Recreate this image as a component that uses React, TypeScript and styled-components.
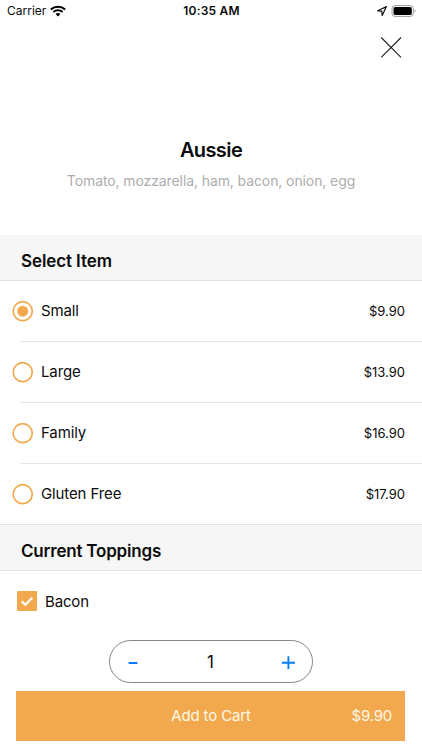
import React, { useState } from "react";
import styled, { createGlobalStyle } from "styled-components";

const ORANGE = "#f2a94d";

const GlobalStyle = createGlobalStyle`
  * { box-sizing: border-box; }
  body { margin: 0; background: #fff; }
  button { font: inherit; color: inherit; background: none; border: 0; padding: 0; cursor: pointer; }
`;

const Screen = styled.main`
  width: 422px;
  height: 750px;
  display: flex;
  flex-direction: column;
  overflow: hidden;
  background: #fff;
  color: #0b0b0c;
  font-family: Inter, "Liberation Sans", sans-serif;
`;

const Text = styled.span<{ $size: number; $weight?: number; $spacing?: number; $color?: string }>`
  font-size: ${(p) => p.$size}px;
  font-weight: ${(p) => p.$weight ?? 400};
  letter-spacing: ${(p) => p.$spacing ?? 0}px;
  color: ${(p) => p.$color ?? "inherit"};
  line-height: 20px;
  white-space: nowrap;
`;

const StatusBar = styled.header`
  height: 22px;
  padding: 0 6px 0 7px;
  display: grid;
  grid-template-columns: 1fr auto 1fr;
  align-items: center;
  flex: none;
`;

const StatusGroup = styled.div<{ $end?: boolean }>`
  display: flex;
  align-items: center;
  gap: 4px;
  justify-content: ${(p) => (p.$end ? "flex-end" : "flex-start")};
`;

const TopBar = styled.div`
  height: 50px;
  padding: 15px 20px 0 0;
  display: flex;
  justify-content: flex-end;
  align-items: flex-start;
  flex: none;
`;

const CloseButton = styled.button`
  width: 22px;
  height: 22px;
  display: block;
  svg { display: block; }
`;

const Intro = styled.section`
  height: 163px;
  padding-top: 68px;
  display: flex;
  flex-direction: column;
  align-items: center;
  gap: 11px;
  flex: none;
`;

const SectionHeader = styled.h2<{ $ruled?: boolean }>`
  height: ${(p) => (p.$ruled ? 47 : 46)}px;
  margin: 0;
  padding: 7px 21px 0;
  display: flex;
  align-items: center;
  background: #f6f6f6;
  border-top: ${(p) => (p.$ruled ? "1px solid #e2e2e5" : "0")};
  border-bottom: 1px solid #e2e2e5;
  flex: none;
`;

const OptionList = styled.div`
  flex: none;
`;

const Option = styled.button<{ $last: boolean }>`
  width: 100%;
  height: ${(p) => (p.$last ? 60 : 61)}px;
  padding: 0 17px ${(p) => (p.$last ? 0 : 1)}px 12px;
  display: flex;
  align-items: center;
  gap: 8px;
  background: ${(p) =>
    p.$last ? "none" : "linear-gradient(#e5e5e7, #e5e5e7) 20px 100% / 402px 1px no-repeat"};
`;

const Price = styled(Text)`
  margin-left: auto;
`;

const Radio = styled.span<{ $on: boolean }>`
  width: 21px;
  height: 21px;
  svg { display: block; }
  circle:last-child { fill: ${(p) => (p.$on ? ORANGE : "none")}; }
`;

const Topping = styled.label`
  height: 60px;
  padding-left: 17px;
  display: flex;
  align-items: center;
  gap: 8px;
  flex: none;
`;

const ToppingName = styled(Text)`
  padding-top: 1px;
`;

const Checkbox = styled.span`
  width: 20px;
  height: 20px;
  border-radius: 1px;
  background: ${ORANGE};
  svg { display: block; }
`;

const Footer = styled.footer`
  padding: 9px 17px 0 16px;
  display: flex;
  flex-direction: column;
  align-items: center;
  gap: 8px;
`;

const Stepper = styled.div`
  width: 204px;
  height: 43px;
  padding: 0 16px;
  border: 1px solid #858585;
  border-radius: 22px;
  display: flex;
  align-items: center;
  justify-content: space-between;
`;

const StepButton = styled.button`
  width: 14px;
  height: 14px;
  svg { display: block; }
`;

const CartButton = styled.button`
  width: 389px;
  height: 50px;
  padding: 0 13px 0 14px;
  display: grid;
  grid-template-columns: 1fr auto 1fr;
  align-items: center;
  background: ${ORANGE};
  color: #fff8e8;
`;

const CartPrice = styled(Text)`
  justify-self: end;
`;

const WifiIcon = () => (
  <svg width="16" height="13" viewBox="0 0 15 13" preserveAspectRatio="none" fill="none" stroke="#000">
    <path d="M.8 4.4a9.6 9.6 0 0 1 13.4 0" strokeWidth="2.1" />
    <path d="M3.2 7a6.1 6.1 0 0 1 8.6 0" strokeWidth="1.9" />
    <path d="M5.2 9a3.4 3.4 0 0 1 4.6 0L7.5 11.4z" fill="#000" stroke="none" />
  </svg>
);

const LocationIcon = () => (
  <svg width="10" height="10" viewBox="0 0 10 10" fill="none" stroke="#111" strokeWidth="1.2" strokeLinejoin="round">
    <path d="M9.4.6.7 4.8l4.1.4.4 4.2z" />
  </svg>
);

const BatteryIcon = () => (
  <svg width="25" height="12" viewBox="0 0 25 12">
    <rect x="1" y=".6" width="21.3" height="10.8" rx="3" fill="#fff" stroke="#999" strokeWidth="1" />
    <rect x="2.5" y="2.1" width="18.3" height="7.8" rx="1.6" fill="#000" />
    <path d="M23.6 4.2c1.3.6 1.3 3 0 3.6z" fill="#888" />
  </svg>
);

const OPTIONS = [
  { name: "Small", price: "$9.90" },
  { name: "Large", price: "$13.90" },
  { name: "Family", price: "$16.90" },
  { name: "Gluten Free", price: "$17.90" },
];

export default function App() {
  const [selected, setSelected] = useState(0);
  const [count, setCount] = useState(1);

  return (
    <Screen>
      <GlobalStyle />
      <StatusBar>
        <StatusGroup>
          <Text $size={12}>Carrier</Text>
          <WifiIcon />
        </StatusGroup>
        <Text $size={12} $weight={600} $spacing={0.2}>10:35 AM</Text>
        <StatusGroup $end>
          <LocationIcon />
          <BatteryIcon />
        </StatusGroup>
      </StatusBar>
      <TopBar>
        <CloseButton aria-label="Close">
          <svg width="22" height="22" viewBox="0 0 22 22" stroke="#222" strokeWidth="1.1">
            <path d="M1.2.5 21 20.3M21 .5 1.2 20.3" />
          </svg>
        </CloseButton>
      </TopBar>
      <Intro>
        <Text $size={20} $weight={600} $spacing={-0.6}>Aussie</Text>
        <Text $size={14} $spacing={-0.1} $color="#adadad">Tomato, mozzarella, ham, bacon, onion, egg</Text>
      </Intro>
      <SectionHeader>
        <Text $size={17} $weight={600} $spacing={-0.1}>Select Item</Text>
      </SectionHeader>
      <OptionList>
        {OPTIONS.map((o, i) => (
          <Option key={o.name} $last={i === OPTIONS.length - 1} onClick={() => setSelected(i)}>
            <Radio $on={i === selected}>
              <svg width="21" height="21" viewBox="0 0 21 21" fill="none">
                <circle cx="10.7" cy="10.2" r="9.5" stroke={ORANGE} strokeWidth="1.7" />
                <circle cx="10.7" cy="10.2" r="5.5" />
              </svg>
            </Radio>
            <Text $size={15} $spacing={-0.12}>{o.name}</Text>
            <Price $size={13}>{o.price}</Price>
          </Option>
        ))}
      </OptionList>
      <SectionHeader $ruled>
        <Text $size={17} $weight={600} $spacing={-0.2}>Current Toppings</Text>
      </SectionHeader>
      <Topping>
        <Checkbox>
          <svg width="20" height="20" viewBox="0 0 20 20" fill="none" stroke="#fff" strokeWidth="2.3">
            <path d="m4.7 10.2 3.6 3.5 7-7" />
          </svg>
        </Checkbox>
        <ToppingName $size={15} $spacing={-0.15}>Bacon</ToppingName>
      </Topping>
      <Footer>
        <Stepper>
          <StepButton aria-label="Remove one" onClick={() => setCount(Math.max(1, count - 1))}>
            <svg width="14" height="14" viewBox="0 0 14 14" stroke="#0a7cff" strokeWidth="2">
              <path d="M2.6 8h8.8" />
            </svg>
          </StepButton>
          <Text $size={17}>{count}</Text>
          <StepButton aria-label="Add one" onClick={() => setCount(count + 1)}>
            <svg width="14" height="14" viewBox="0 0 14 14" stroke="#0a7cff" strokeWidth="1.9">
              <path d="M.8 7.8H14M7.4 1.3v12.7" />
            </svg>
          </StepButton>
        </Stepper>
        <CartButton>
          <span />
          <Text $size={15} $spacing={-0.15}>Add to Cart</Text>
          <CartPrice $size={15} $spacing={-0.2}>$9.90</CartPrice>
        </CartButton>
      </Footer>
    </Screen>
  );
}
